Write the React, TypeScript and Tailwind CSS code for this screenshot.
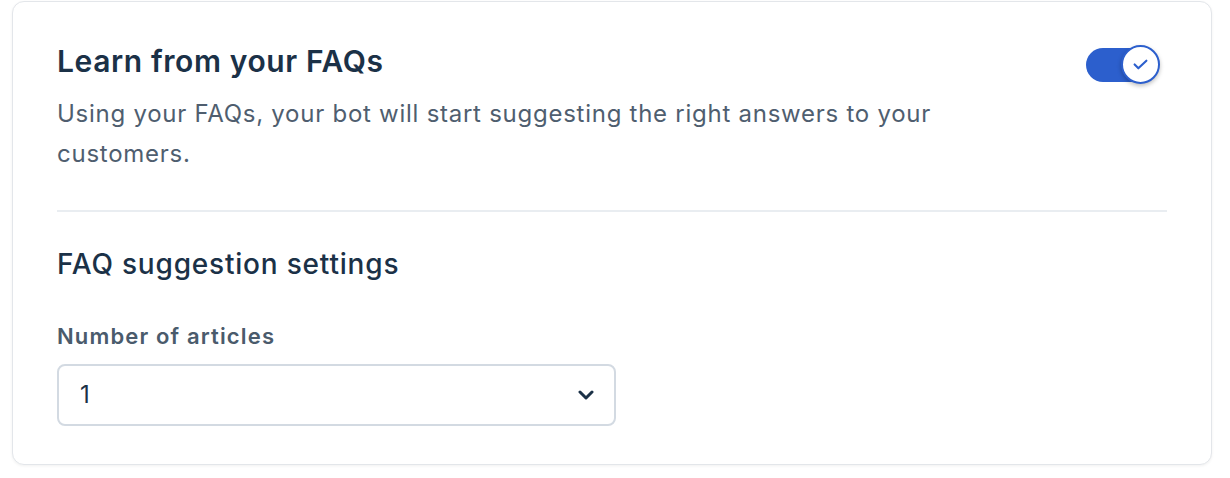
import { useState } from 'react';

function Toggle({ on, onChange }: { on: boolean; onChange: (v: boolean) => void }) {
  return (
    <button
      type="button"
      onClick={() => onChange(!on)}
      className="relative w-[74px] h-[40px] shrink-0 mr-[7px] mt-[4px]"
    >
      <span className="absolute left-0 top-[3px] w-[66px] h-[34px] rounded-full bg-[#2c5fcd]" />
      <span className="absolute right-0 top-0 w-[39px] h-[39px] rounded-full bg-white border-2 border-[#2c5fcd] shadow-[0_2px_4px_rgba(0,0,0,0.25)] flex items-center justify-center">
        <svg width="15" height="11" viewBox="0 0 14 10" fill="none">
          <path d="M1.5 5 L5 8.5 L12.5 1.5" stroke="#2c5fcd" strokeWidth="2" strokeLinecap="round" strokeLinejoin="round" />
        </svg>
      </span>
    </button>
  );
}

export default function App() {
  const [enabled, setEnabled] = useState(true);

  return (
    <div className="pl-3 pr-[18px] pt-px font-['Inter',sans-serif] bg-white min-h-screen">
      <div className="rounded-xl border border-[#e3e6ea] bg-white shadow-[0_1px_3px_rgba(0,0,0,0.06)] px-[44px] pt-[39px] pb-[38px]">
        <div className="flex items-start justify-between">
          <div>
            <h2 className="text-[30px] leading-[40px] font-semibold tracking-[0.6px] text-[#1b3147]">Learn from your FAQs</h2>
            <p className="mt-[13px] text-[24px] leading-[40px] tracking-[0.74px] text-[#4f5e6f] max-w-[920px]">
              Using your FAQs, your bot will start suggesting the right answers to your customers.
            </p>
          </div>
          <Toggle on={enabled} onChange={setEnabled} />
        </div>

        <div className="mt-9 h-[2px] bg-[#e9edf1]" />

        <h3 className="mt-[34px] text-[28px] leading-[36px] font-medium tracking-[0.8px] text-[#1b3147]">FAQ suggestion settings</h3>

        <label className="block mt-[40px] text-[22px] leading-[28px] font-semibold tracking-[1.15px] text-[#4a5b6c]">Number of articles</label>
        <div className="mt-[14px] w-[559px] h-[62px] rounded-lg border-2 border-[#d3dae2] flex items-center justify-between pl-[21px] pr-[20px]">
          <span className="text-[24px] text-[#1b3147]">1</span>
          <svg width="16" height="10" viewBox="0 0 16 10" fill="none">
            <path d="M2 2 L8 8 L14 2" stroke="#1b3147" strokeWidth="3" strokeLinecap="round" strokeLinejoin="round" />
          </svg>
        </div>
      </div>
    </div>
  );
}
